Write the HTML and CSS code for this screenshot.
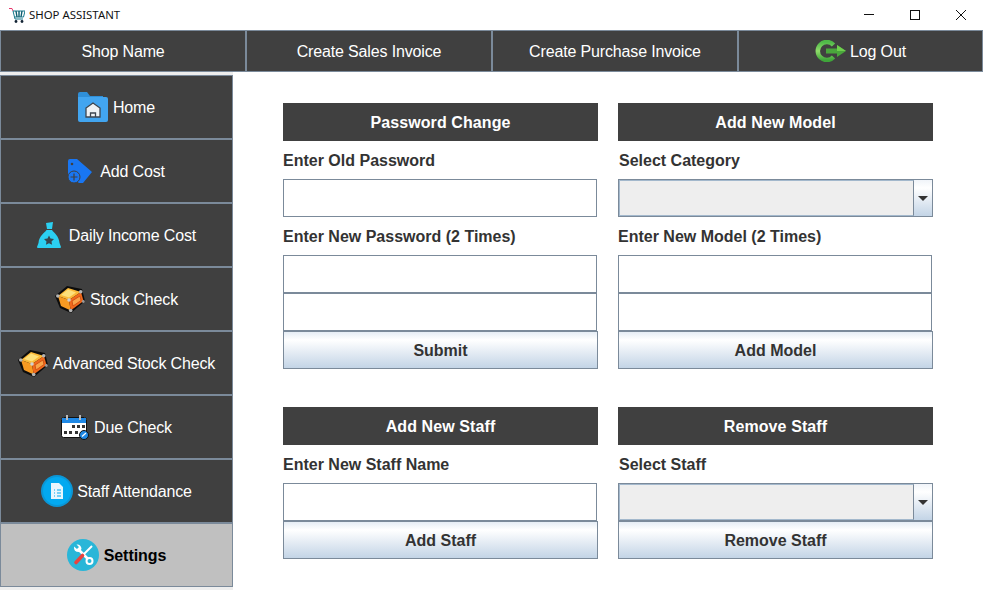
FILE: index.html
```html
<!DOCTYPE html>
<html>
<head>
  <title>Shop Assistant</title>
  <link rel="stylesheet" href="styles.css">
</head>
<body>

<svg class="defs" width="0" height="0">
  <defs>
    <linearGradient id="greenArc" x1="0" y1="0" x2="0" y2="1">
      <stop offset="0" stop-color="#4fb848"/>
      <stop offset="0.5" stop-color="#8fdc6a"/>
      <stop offset="1" stop-color="#3fa53a"/>
    </linearGradient>
  </defs>
  <symbol id="chest" viewBox="0 0 30 28">
    <path d="M0 11 L12 1 L27 4 L30 16 L16 28 L5 23 Z" fill="#0c0c0c"/>
    <path d="M3 11 L13 3 L26 7 L14 15 Z" fill="#fbb938"/>
    <path d="M6 10 L13 4.5 L21 7.5 L14 12.5 Z" fill="#fde07a"/>
    <path d="M3 11 L14 15 L15.7 25.5 L6 21 Z" fill="#f79a22"/>
    <path d="M14 15 L26 7 L28.5 16 L15.7 25.5 Z" fill="#f0691c"/>
    <path d="M17 16 L25 11 L26 15.5 L18 21 Z" fill="#f9a44a" stroke="#c9480f" stroke-width="0.8"/>
    <circle cx="2.8" cy="11" r="1.8" fill="#b5b5b5"/>
    <circle cx="25.7" cy="6.7" r="1.8" fill="#b5b5b5"/>
    <circle cx="14" cy="15" r="1.8" fill="#d0d0d0"/>
    <circle cx="15.7" cy="25.5" r="1.8" fill="#b5b5b5"/>
    <circle cx="28.3" cy="16.5" r="1.4" fill="#999"/>
  </symbol>
</svg>

<header class="titlebar">
  <div class="app-title">
    <svg class="cart" width="16" height="16" viewBox="0 0 16 16">
      <path d="M0 1.5 H3 L4 4" stroke="#e8386d" stroke-width="1" fill="none"/>
      <path d="M4 4 H16 L14.5 10 H5.5 Z" fill="#fff" stroke="#17798c" stroke-width="1"/>
      <path d="M7 4 L8 10 M10 4 V10 M13 4 L12 10" stroke="#0c5f70" stroke-width="1.4" fill="none"/>
      <path d="M5.5 10 L6 12 H14" stroke="#17798c" stroke-width="1" fill="none"/>
      <circle cx="7" cy="14.5" r="1.4" fill="#123"/>
      <circle cx="13" cy="14.5" r="1.4" fill="#123"/>
    </svg>
    <span>SHOP ASSISTANT</span>
  </div>
  <div class="win-controls">
    <svg width="10" height="10" viewBox="0 0 10 10"><path d="M0 4.5 H10" stroke="#111"/></svg>
    <svg width="10" height="10" viewBox="0 0 10 10"><rect x="0.5" y="0.5" width="9" height="9" fill="none" stroke="#111"/></svg>
    <svg width="10" height="10" viewBox="0 0 10 10"><path d="M0 0 L10 10 M10 0 L0 10" stroke="#111" fill="none"/></svg>
  </div>
</header>

<nav class="topnav">
  <button class="nav-btn"><span>Shop Name</span></button>
  <button class="nav-btn"><span>Create Sales Invoice</span></button>
  <button class="nav-btn"><span>Create Purchase Invoice</span></button>
  <button class="nav-btn">
    <svg width="31" height="22" viewBox="0 0 31 22">
      <path d="M18.5 5 A9 9 0 1 0 18.5 17" fill="none" stroke="url(#greenArc)" stroke-width="4.5"/>
      <path d="M11 8.5 H22 V5 L31 11 L22 17 V13.5 H11 Z" fill="#4aa63c"/>
      <path d="M22 5 L31 11 L22 11 Z" fill="#6fd04e"/>
    </svg>
    <span>Log Out</span>
  </button>
</nav>

<div class="layout">
  <aside class="sidebar">
    <button class="side-btn">
      <svg width="30" height="30" viewBox="0 0 30 30">
        <path d="M0 2 Q0 0 2 0 H9 L12 4 H25 V7 H0 Z" fill="#2f8fd8"/>
        <path d="M0 5 H28 Q30 5 30 7 V28 Q30 30 28 30 H2 Q0 30 0 28 Z" fill="#42a5f0"/>
        <path d="M8 16 L15 11 L22 16 V25 H8 Z" fill="#eef2f5" stroke="#3d4650" stroke-width="1.3"/>
        <path d="M12.5 25 V21 H17.5 V25" fill="none" stroke="#3d4650" stroke-width="1.3"/>
      </svg>
      <span>Home</span>
    </button>
    <button class="side-btn">
      <svg class="wide-gap" width="24" height="24" viewBox="0 0 24 24">
        <path d="M0 2 Q0 0 2 0 H9 L24 13 L15 24 H11 L3 18 H0 Z" fill="#1976f2"/>
        <circle cx="4" cy="5" r="1.3" fill="#404040"/>
        <circle cx="6" cy="18" r="6" fill="#1976f2" stroke="#404040"/>
        <path d="M6 14.5 V21.5 M2.5 18 H9.5" stroke="#404040" stroke-width="1.2"/>
      </svg>
      <span>Add Cost</span>
    </button>
    <button class="side-btn">
      <svg class="wide-gap" width="24" height="26" viewBox="0 0 24 26">
        <path d="M9 1 L16 0 L15 7 H10 Z" fill="#2bd0f2"/>
        <path d="M9.5 8 H15 C17 11 22 14 22.5 21 L24 25 Q24 26 23 26 H1 Q0 26 0 25 L1.5 21 C2 14 7.5 11 9.5 8 Z" fill="#2bd0f2"/>
        <path d="M12 13.5 L13.5 16.6 L17 17 L14.5 19.4 L15.1 22.8 L12 21.2 L8.9 22.8 L9.5 19.4 L7 17 L10.5 16.6 Z" fill="#37474f"/>
      </svg>
      <span>Daily Income Cost</span>
    </button>
    <button class="side-btn">
      <svg width="30" height="28"><use href="#chest"/></svg>
      <span>Stock Check</span>
    </button>
    <button class="side-btn">
      <svg width="30" height="28"><use href="#chest"/></svg>
      <span>Advanced Stock Check</span>
    </button>
    <button class="side-btn">
      <svg width="28" height="25" viewBox="0 0 28 25">
        <rect x="0.5" y="2.5" width="25" height="20" rx="2" fill="#fff" stroke="#111"/>
        <path d="M1 3 H25 V8 H1 Z" fill="#1e88e5"/>
        <path d="M6 0 V5 M19 0 V5" stroke="#bbb" stroke-width="2"/>
        <path d="M11 10 h3 v3 h-3 z M16 10 h3 v3 h-3 z M21 10 h3 v3 h-3 z M3 16 h3 v3 h-3 z M8 16 h3 v3 h-3 z M14 16 h3 v3 h-3 z" fill="#333"/>
        <circle cx="23" cy="20" r="4.5" fill="#1e88e5" stroke="#111"/>
        <path d="M21 21.5 L25 18" stroke="#fff" stroke-width="1.2"/>
      </svg>
      <span>Due Check</span>
    </button>
    <button class="side-btn">
      <svg class="narrow-gap" width="32" height="32" viewBox="0 0 32 32">
        <circle cx="16" cy="16" r="16" fill="#0b96d6"/>
        <circle cx="16" cy="16" r="14" fill="#03a9f0"/>
        <path d="M10 8 H18 L22 12 V24 H10 Z" fill="#e8f6fd"/>
        <path d="M13 15 H14 M16 15 H20 M13 18 H14 M16 18 H20 M13 21 H14 M16 21 H20" stroke="#03a9f0"/>
      </svg>
      <span>Staff Attendance</span>
    </button>
    <button class="side-btn active">
      <svg width="32" height="32" viewBox="0 0 32 32">
        <circle cx="16" cy="16" r="16" fill="#29b6d8"/>
        <path d="M12 11 L21 20" stroke="#fff" stroke-width="2.6"/>
        <path d="M7 7.5 L10 10 L12 8 L9.5 5.5 Q14 5 14.5 10 L12 13 Q6.5 13 7 7.5 Z" fill="#fff"/>
        <circle cx="22.5" cy="22" r="3" fill="none" stroke="#fff" stroke-width="2"/>
        <path d="M25 7 L15 17" stroke="#fff" stroke-width="2"/>
        <path d="M15.5 16.5 L9 23.5" stroke="#e8433f" stroke-width="3.6" stroke-linecap="round"/>
      </svg>
      <span>Settings</span>
    </button>
  </aside>

  <main class="content">
    <section class="panel">
      <h2 class="panel-title">Password Change</h2>
      <label class="field-label">Enter Old Password</label>
      <input class="text-input" type="text">
      <label class="field-label">Enter New Password (2 Times)</label>
      <input class="text-input" type="text">
      <input class="text-input" type="text">
      <button class="action-btn">Submit</button>
    </section>

    <section class="panel">
      <h2 class="panel-title">Add New Model</h2>
      <label class="field-label nudge">Select Category</label>
      <div class="combo"><div class="combo-field"></div><div class="combo-arrow"></div></div>
      <label class="field-label">Enter New Model (2 Times)</label>
      <input class="text-input" type="text">
      <input class="text-input" type="text">
      <button class="action-btn">Add Model</button>
    </section>

    <section class="panel">
      <h2 class="panel-title">Add New Staff</h2>
      <label class="field-label">Enter New Staff Name</label>
      <input class="text-input" type="text">
      <button class="action-btn">Add Staff</button>
    </section>

    <section class="panel">
      <h2 class="panel-title">Remove Staff</h2>
      <label class="field-label nudge">Select Staff</label>
      <div class="combo"><div class="combo-field"></div><div class="combo-arrow"></div></div>
      <button class="action-btn">Remove Staff</button>
    </section>
  </main>
</div>

</body>
</html>
```

FILE: styles.css
```css
* { box-sizing: border-box; }
html, body { height: 100%; }
body { margin: 0; background: #fff; color: #333; font-family: "Liberation Sans", Arial, sans-serif; font-size: 16px; display: flex; flex-direction: column; overflow: hidden; }
.defs { position: absolute; }

.titlebar { height: 30px; flex: none; display: flex; justify-content: space-between; align-items: center; background: #fff; }
.app-title { display: flex; align-items: center; gap: 4px; padding-left: 9px; font-family: "Noto Sans", sans-serif; font-size: 11.4px; color: #111; }
.app-title span { padding-bottom: 2px; }
.win-controls { display: flex; gap: 36px; padding-right: 17px; }
.win-controls svg { display: block; }

.topnav { height: 42px; flex: none; display: grid; grid-template-columns: 246px 246px 246px 245px; }
.nav-btn, .side-btn { display: flex; align-items: center; justify-content: center; gap: 5px; background: #404040; color: #fff; border: 1px solid #7b8a9a; font: 16px "Liberation Sans", Arial, sans-serif; letter-spacing: -0.15px; padding: 0; }
.nav-btn span, .side-btn span { padding-top: 2px; }
.nav-btn { gap: 4px; }

.layout { flex: 1; display: flex; min-height: 0; }
.sidebar { width: 233px; flex: none; background: #eee; padding-top: 3px; display: flex; flex-direction: column; }
.side-btn { height: 64px; flex: none; }
.side-btn .wide-gap { margin-right: 3px; }
.side-btn .narrow-gap { margin-right: -1px; }
.side-btn.active { background: #c0c0c0; color: #000; font-weight: bold; letter-spacing: -0.05px; }

.content { flex: 1; padding: 31px 50px 0; display: grid; grid-template-columns: 315px 315px; column-gap: 20px; row-gap: 38px; align-content: start; }
.panel { display: grid; grid-auto-rows: 38px; }
.panel-title { margin: 0; padding-top: 2px; background: #404040; color: #fff; font-size: 16px; font-weight: bold; letter-spacing: 0.1px; display: flex; align-items: center; justify-content: center; }
.field-label { display: flex; align-items: center; padding-top: 2px; font-weight: bold; color: #333; }
.field-label.nudge { padding-left: 1px; }

.text-input { width: 314px; height: 38px; border: 1px solid #7b8a9a; background: #fff; margin: 0; padding: 0 4px; outline: none; }
.action-btn { border: 1px solid #7b8a9a; background: linear-gradient(#e6edf5 0, #fff 22%, #c3d4e6 100%); color: #333; font: bold 16px "Liberation Sans", Arial, sans-serif; padding: 2px 0 0; }

.combo { display: flex; border: 1px solid #7b8a9a; }
.combo-field { flex: 1; background: #eee; border: 1px solid #a3b8cc; border-right: 1px solid #7b8a9a; }
.combo-arrow { width: 18px; position: relative; background: linear-gradient(#f0f4f9 0, #fff 22%, #c3d4e6 100%); }
.combo-arrow::after { content: ""; position: absolute; left: 4px; top: 16px; border: 5px solid transparent; border-top-color: #333; border-bottom: 0; }
```
